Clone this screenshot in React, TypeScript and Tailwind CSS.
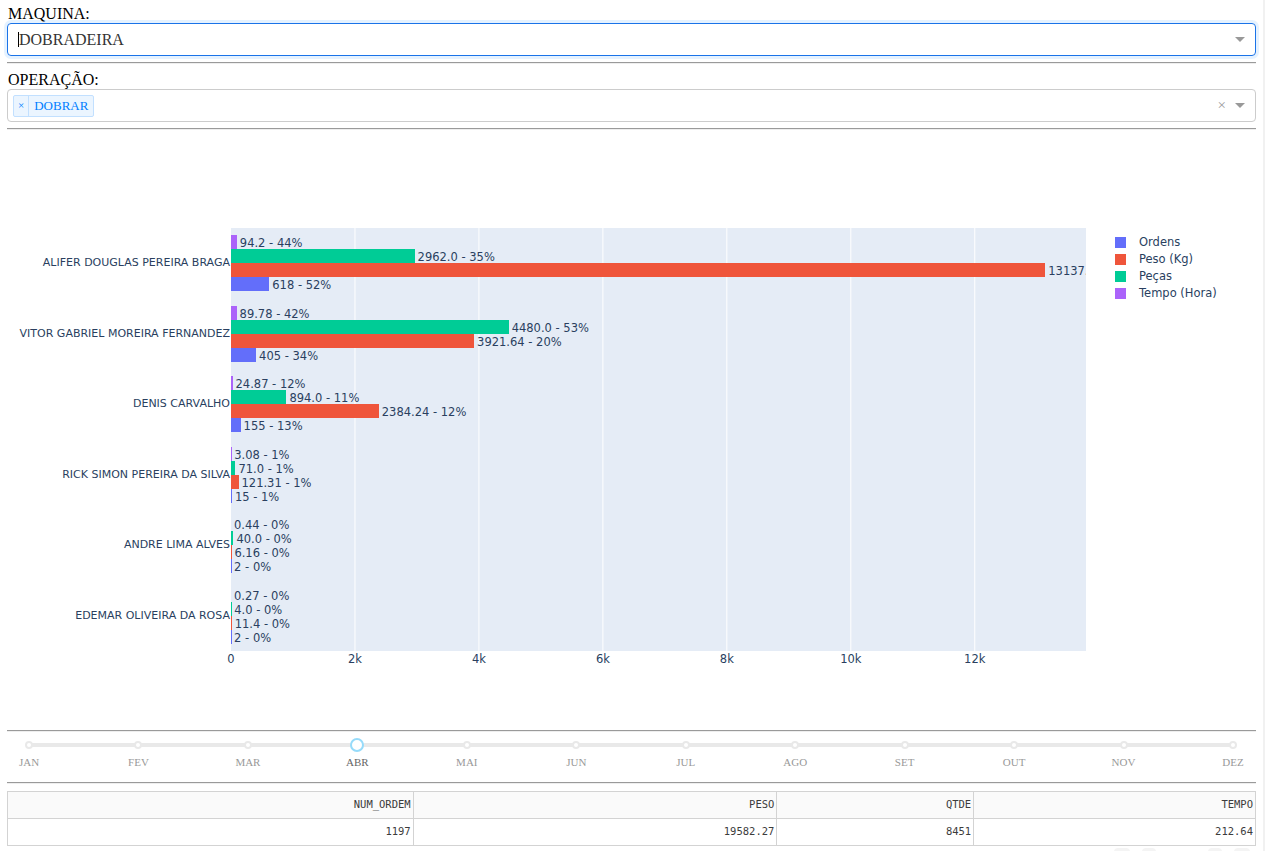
import React from 'react';

const PX = 855 / 13794.4;

type Bar = { value: number; label: string; color: string };
type Row = { name: string; bars: Bar[] };

const tempo = 'bg-[#ab63fa]';
const pecas = 'bg-[#00cc96]';
const peso = 'bg-[#ef553b]';
const ordens = 'bg-[#636efa]';

const rows: Row[] = [
  {
    name: 'ALIFER DOUGLAS PEREIRA BRAGA',
    bars: [
      { value: 94.2, label: '94.2 - 44%', color: tempo },
      { value: 2962, label: '2962.0 - 35%', color: pecas },
      { value: 13137.5, label: '13137.5 - 67%', color: peso },
      { value: 618, label: '618 - 52%', color: ordens },
    ],
  },
  {
    name: 'VITOR GABRIEL MOREIRA FERNANDEZ',
    bars: [
      { value: 89.78, label: '89.78 - 42%', color: tempo },
      { value: 4480, label: '4480.0 - 53%', color: pecas },
      { value: 3921.64, label: '3921.64 - 20%', color: peso },
      { value: 405, label: '405 - 34%', color: ordens },
    ],
  },
  {
    name: 'DENIS CARVALHO',
    bars: [
      { value: 24.87, label: '24.87 - 12%', color: tempo },
      { value: 894, label: '894.0 - 11%', color: pecas },
      { value: 2384.24, label: '2384.24 - 12%', color: peso },
      { value: 155, label: '155 - 13%', color: ordens },
    ],
  },
  {
    name: 'RICK SIMON PEREIRA DA SILVA',
    bars: [
      { value: 3.08, label: '3.08 - 1%', color: tempo },
      { value: 71, label: '71.0 - 1%', color: pecas },
      { value: 121.31, label: '121.31 - 1%', color: peso },
      { value: 15, label: '15 - 1%', color: ordens },
    ],
  },
  {
    name: 'ANDRE LIMA ALVES',
    bars: [
      { value: 0.44, label: '0.44 - 0%', color: tempo },
      { value: 40, label: '40.0 - 0%', color: pecas },
      { value: 6.16, label: '6.16 - 0%', color: peso },
      { value: 2, label: '2 - 0%', color: ordens },
    ],
  },
  {
    name: 'EDEMAR OLIVEIRA DA ROSA',
    bars: [
      { value: 0.27, label: '0.27 - 0%', color: tempo },
      { value: 4, label: '4.0 - 0%', color: pecas },
      { value: 11.4, label: '11.4 - 0%', color: peso },
      { value: 2, label: '2 - 0%', color: ordens },
    ],
  },
];

const legend = [
  { name: 'Ordens', color: ordens },
  { name: 'Peso (Kg)', color: peso },
  { name: 'Peças', color: pecas },
  { name: 'Tempo (Hora)', color: tempo },
];

const ticks = ['0', '2k', '4k', '6k', '8k', '10k', '12k'];
const months = ['JAN', 'FEV', 'MAR', 'ABR', 'MAI', 'JUN', 'JUL', 'AGO', 'SET', 'OUT', 'NOV', 'DEZ'];

function Arrow() {
  return <span className="w-0 h-0 border-x-[5px] border-x-transparent border-t-[5px] border-t-[#999]" />;
}

function Hr() {
  return <div className="border-t border-t-[#9a9a9a] border-b border-b-[#eeeeee]" />;
}

function Chart() {
  return (
    <div className="h-[600px] font-['DejaVu_Sans',Verdana,sans-serif] text-[#2a3f5f]">
      <div className="h-[98px]" />
      <div className="flex">
        <div className="w-[224px] h-[423px] grid grid-rows-6 text-[11px]">
          {rows.map((r) => (
            <div key={r.name} className="flex items-center justify-end pr-[1px] whitespace-nowrap">
              {r.name}
            </div>
          ))}
        </div>
        <div className="relative w-[855px] h-[423px] bg-[#e5ecf6] overflow-hidden">
          <svg className="absolute inset-0" width={855} height={423}>
            {[1, 2, 3, 4, 5, 6].map((i) => (
              <line key={i} x1={i * 123.96} x2={i * 123.96} y1={0} y2={423} stroke="#ffffff" strokeWidth={1} />
            ))}
          </svg>
          <div className="relative grid grid-rows-6 h-full">
            {rows.map((r) => (
              <div key={r.name} className="flex flex-col justify-center">
                {r.bars.map((b) => (
                  <div key={b.label} className="flex items-center h-[14.1px]">
                    <div className={`h-full shrink-0 ${b.color}`} style={{ width: b.value * PX }} />
                    <span className="ml-[3px] pt-[2px] text-[11.5px] leading-[14px] whitespace-nowrap">{b.label}</span>
                  </div>
                ))}
              </div>
            ))}
          </div>
        </div>
        <div className="ml-[29px] pt-[6px] flex flex-col text-[11.5px]">
          {legend.map((l) => (
            <div key={l.name} className="flex items-center h-[17px]">
              <span className={`w-[11px] h-[11px] ${l.color}`} />
              <span className="ml-[13px]">{l.name}</span>
            </div>
          ))}
        </div>
      </div>
      <div className="relative ml-[224px] w-[855px] h-[20px] text-[11.5px]">
        {ticks.map((t, i) => (
          <span
            key={t}
            className="absolute top-[1px] leading-[14px] -translate-x-1/2"
            style={{ left: i * 123.96 }}
          >
            {t}
          </span>
        ))}
      </div>
    </div>
  );
}

function MonthSlider() {
  return (
    <div className="relative h-[50px] font-['Liberation_Serif',serif]">
      <div className="absolute left-[22px] right-[23px] top-[11px] h-[4px] rounded bg-[#e9e9e9]" />
      <div className="absolute left-[2px] right-[3px] top-[6px] flex justify-between">
        {months.map((m) => (
          <div key={m} className="w-[40px] flex flex-col items-center">
            <div className="h-[14px] flex items-center justify-center">
              {m === 'ABR' ? (
                <span className="w-[14px] h-[14px] rounded-full border-2 border-[#96dbfa] bg-white" />
              ) : (
                <span className="w-[8px] h-[8px] rounded-full border-2 border-[#e9e9e9] bg-white" />
              )}
            </div>
            <span className={`text-[11px] leading-[20px] ${m === 'ABR' ? 'text-[#666]' : 'text-[#999]'}`}>{m}</span>
          </div>
        ))}
      </div>
    </div>
  );
}

function SummaryTable() {
  const cols = [
    { name: 'NUM_ORDEM', value: '1197', w: 'w-[406px]' },
    { name: 'PESO', value: '19582.27', w: 'w-[364px]' },
    { name: 'QTDE', value: '8451', w: 'w-[197px]' },
    { name: 'TEMPO', value: '212.64', w: 'w-[282px]' },
  ];
  return (
    <table className="mt-[7px] w-full border-collapse font-['DejaVu_Sans_Mono',monospace] text-[10.5px] text-[#3c3c3c]">
      <thead>
        <tr className="bg-[#fafafa]">
          {cols.map((c) => (
            <th key={c.name} className={`${c.w} h-[27px] border border-[#d3d3d3] text-right font-normal pr-[2px]`}>
              {c.name}
            </th>
          ))}
        </tr>
      </thead>
      <tbody>
        <tr>
          {cols.map((c) => (
            <td key={c.name} className="h-[27px] border border-[#d3d3d3] text-right pr-[2px]">
              {c.value}
            </td>
          ))}
        </tr>
      </tbody>
    </table>
  );
}

export default function App() {
  return (
    <div className="flex h-[851px] overflow-hidden bg-white">
      <div className="w-[1263px] shrink-0 px-[7px] pt-[5px] font-['Liberation_Serif',serif] text-[16px] text-black">
        <div className="h-[18px] leading-[18px] pl-[1px]">MAQUINA:</div>
        <div className="h-[33px] flex items-center rounded border border-[#1a73e8] shadow-[0_0_0_3px_rgba(0,126,255,0.1)] pl-[10px] pr-[10px]">
          <span className="w-px h-[15px] bg-black" />
          <span className="flex-1 text-[#333]">DOBRADEIRA</span>
          <Arrow />
        </div>
        <div className="mt-[6px] mb-[7px]">
          <Hr />
        </div>
        <div className="h-[18px] leading-[18px] pl-[1px]">OPERAÇÃO:</div>
        <div className="h-[33px] flex items-center rounded border border-[#cccccc] pl-[5px] pr-[10px]">
          <div className="flex h-[22px] items-stretch rounded-[2px] border border-[#c2e0ff] bg-[#ebf5ff] text-[#007eff] text-[13px]">
            <span className="flex items-center px-[4px] border-r border-[#c2e0ff] text-[11px]">×</span>
            <span className="flex items-center px-[5px]">DOBRAR</span>
          </div>
          <span className="flex-1" />
          <span className="text-[#999] text-[15px] leading-none mr-[9px]">×</span>
          <Arrow />
        </div>
        <div className="mt-[6px]">
          <Hr />
        </div>
        <Chart />
        <Hr />
        <MonthSlider />
        <Hr />
        <SummaryTable />
        <div className="flex justify-end gap-[12px] mt-[2px] pr-[6px]">
          <span className="w-[16px] h-[12px] rounded-sm bg-[#f4f4f4]" />
          <span className="w-[14px] h-[12px] rounded-sm bg-[#f4f4f4] mr-[40px]" />
          <span className="w-[14px] h-[12px] rounded-sm bg-[#f4f4f4]" />
          <span className="w-[16px] h-[12px] rounded-sm bg-[#f4f4f4]" />
        </div>
      </div>
      <div className="flex-1 bg-[#f1f1f1]" />
    </div>
  );
}
